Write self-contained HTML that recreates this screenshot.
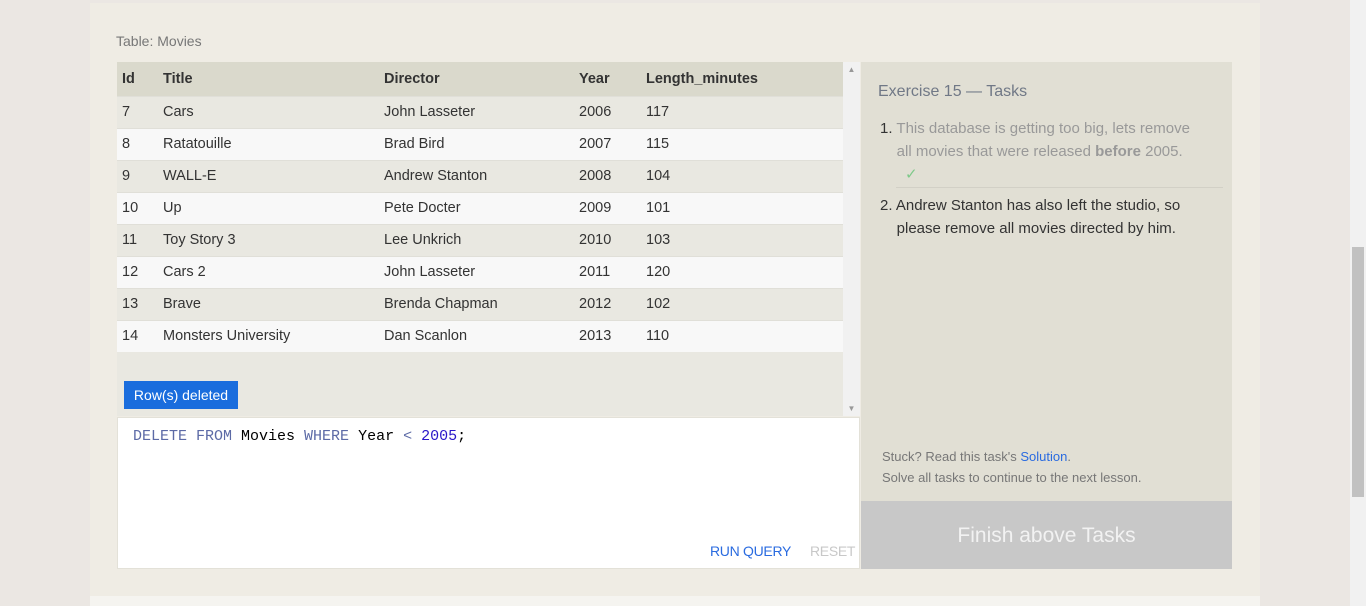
<!DOCTYPE html>
<html><head><style>
*{margin:0;padding:0;box-sizing:border-box}
body{width:1366px;height:606px;background:#ebe7e3;font-family:"Liberation Sans",sans-serif;position:relative;overflow:hidden;color:#333}
.main{position:absolute;left:90px;top:3px;width:1170px;height:593px;background:#efece4}
.bot{position:absolute;left:90px;top:596px;width:1170px;height:10px;background:#f5f4f0}
.sb{position:absolute;left:1350px;top:0;width:16px;height:606px;background:#f1f1f1}
.sb div{position:absolute;left:2px;top:247px;width:12px;height:250px;background:#c1c1c1}
.lbl{position:absolute;left:116px;top:33px;font-size:14px;color:#777}
.tbl{position:absolute;left:117px;top:62px;width:743px;height:354px;background:#e9e8e1}
table{border-collapse:collapse;width:726px;font-size:14.5px}
th{background:#dad9cc;height:34px;text-align:left;font-weight:bold;color:#333}
td{height:32px;border-top:1px solid #e0dfd8;color:#333}
tr:nth-child(odd) td{background:#f8f8f8}
tr:nth-child(even) td{background:#e9e8e1}
th,td{padding-left:5px}
.tsb{position:absolute;left:726px;top:0;width:17px;height:354px;background:#f1f1f1;font-size:8px;color:#999;text-align:center}
.badge{position:absolute;left:7px;top:319px;width:114px;height:28px;background:#1a6ddd;color:#fff;font-size:14px;line-height:28px;text-align:center}
.ed{position:absolute;left:117px;top:417px;width:743px;height:152px;background:#fff;border:1px solid #e3e1d8}
.code{position:absolute;left:15px;top:10px;font-family:"Liberation Mono",monospace;font-size:15px;color:#000}
.kw{color:#5c6aa6}.num{color:#2a17c9}
.run{position:absolute;left:592px;top:125px;font-size:14px;color:#2a6be0;letter-spacing:-0.3px}
.reset{position:absolute;left:692px;top:125px;font-size:14px;color:#c8c8c8;letter-spacing:-0.3px}
.rp{position:absolute;left:861px;top:62px;width:371px;height:507px;background:#e1dfd4}
.rp h3{position:absolute;left:17px;top:21px;font-weight:normal;font-size:16px;color:#707886}
.t1{position:absolute;left:19px;top:55px;width:340px;font-size:15px;line-height:23px;color:#999}
.t2{position:absolute;left:19px;top:132px;width:340px;font-size:15px;line-height:23px;color:#333}
.hr{position:absolute;left:35px;top:125px;width:327px;height:1px;background:#d2d0c6}
.stuck{position:absolute;left:21px;top:384px;font-size:13px;line-height:21px;color:#777}
.stuck a{color:#2a6be0;text-decoration:none}
.fin{position:absolute;left:0;top:439px;width:371px;height:68px;background:#c8c8c8;color:#f2f2f2;font-size:21px;text-align:center;line-height:70px}
</style></head><body>
<div class="main"></div><div class="bot"></div>
<div class="sb"><div></div></div>
<div class="lbl">Table: Movies</div>
<div class="tbl">
<table>
<tr><th style="width:41px">Id</th><th style="width:221px">Title</th><th style="width:195px">Director</th><th style="width:67px">Year</th><th>Length_minutes</th></tr>
<tr><td>7</td><td>Cars</td><td>John Lasseter</td><td>2006</td><td>117</td></tr>
<tr><td>8</td><td>Ratatouille</td><td>Brad Bird</td><td>2007</td><td>115</td></tr>
<tr><td>9</td><td>WALL-E</td><td>Andrew Stanton</td><td>2008</td><td>104</td></tr>
<tr><td>10</td><td>Up</td><td>Pete Docter</td><td>2009</td><td>101</td></tr>
<tr><td>11</td><td>Toy Story 3</td><td>Lee Unkrich</td><td>2010</td><td>103</td></tr>
<tr><td>12</td><td>Cars 2</td><td>John Lasseter</td><td>2011</td><td>120</td></tr>
<tr><td>13</td><td>Brave</td><td>Brenda Chapman</td><td>2012</td><td>102</td></tr>
<tr><td>14</td><td>Monsters University</td><td>Dan Scanlon</td><td>2013</td><td>110</td></tr>
</table>
<div class="tsb"><div style="margin-top:3px">▲</div><div style="position:absolute;bottom:3px;width:17px">▼</div></div>
<div class="badge">Row(s) deleted</div>
</div>
<div class="ed"><div class="code"><span class="kw">DELETE FROM</span> Movies <span class="kw">WHERE</span> Year <span class="kw">&lt;</span> <span class="num">2005</span>;</div>
<div class="run">RUN QUERY</div><div class="reset">RESET</div></div>
<div class="rp">
<h3>Exercise 15 — Tasks</h3>
<div class="t1"><span style="color:#333">1.</span> This database is getting too big, lets remove<br>&nbsp;&nbsp;&nbsp;&nbsp;all movies that were released <b>before</b> 2005.<br>&nbsp;&nbsp;&nbsp;&nbsp;&nbsp;&nbsp;<span style="color:#7fc98a">✓</span></div>
<div class="hr"></div>
<div class="t2">2. Andrew Stanton has also left the studio, so<br>&nbsp;&nbsp;&nbsp;&nbsp;please remove all movies directed by him.</div>
<div class="stuck">Stuck? Read this task's <a>Solution</a>.<br>Solve all tasks to continue to the next lesson.</div>
<div class="fin">Finish above Tasks</div>
</div>
</body></html>
